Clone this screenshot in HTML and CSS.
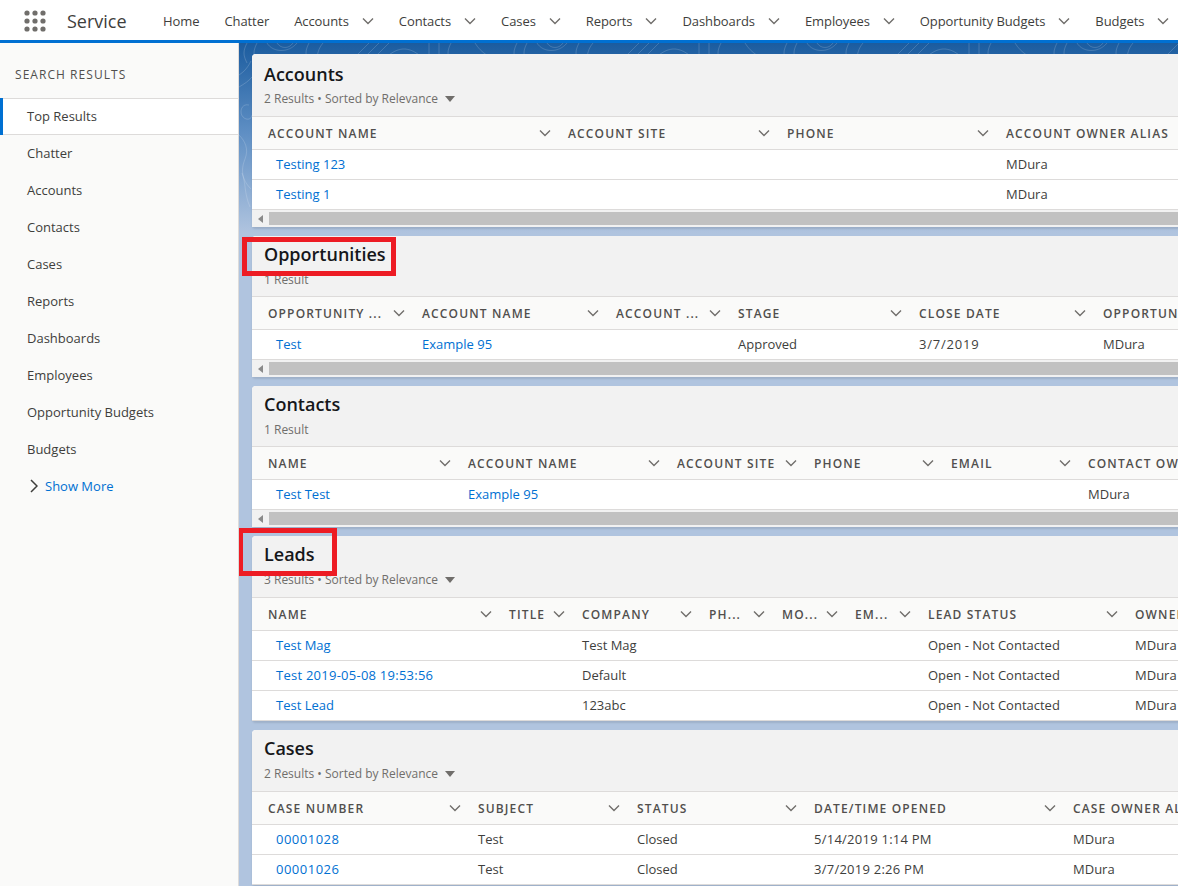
FILE: index.html
```html
<!DOCTYPE html>
<html lang="en">
<head>
<meta charset="utf-8">
<title>Search Results | Service</title>
<link rel="stylesheet" href="styles.css">
</head>
<body>
<header class="topbar">
  <svg class="launcher" width="22" height="22" viewBox="0 0 22 22" aria-hidden="true">
    <g fill="#706e6b">
      <circle cx="3" cy="3" r="2.6"/><circle cx="11" cy="3" r="2.6"/><circle cx="19" cy="3" r="2.6"/>
      <circle cx="3" cy="11" r="2.6"/><circle cx="11" cy="11" r="2.6"/><circle cx="19" cy="11" r="2.6"/>
      <circle cx="3" cy="19" r="2.6"/><circle cx="11" cy="19" r="2.6"/><circle cx="19" cy="19" r="2.6"/>
    </g>
  </svg>
  <span class="app-name">Service</span>
  <nav class="nav">
    <a class="nav-item">Home</a>
    <a class="nav-item">Chatter</a>
    <a class="nav-item has-menu">Accounts <svg class="chev nav-chev" viewBox="0 0 12 8"><path d="M1 1.5l5 5 5-5"/></svg></a>
    <a class="nav-item has-menu">Contacts <svg class="chev nav-chev" viewBox="0 0 12 8"><path d="M1 1.5l5 5 5-5"/></svg></a>
    <a class="nav-item has-menu">Cases <svg class="chev nav-chev" viewBox="0 0 12 8"><path d="M1 1.5l5 5 5-5"/></svg></a>
    <a class="nav-item has-menu">Reports <svg class="chev nav-chev" viewBox="0 0 12 8"><path d="M1 1.5l5 5 5-5"/></svg></a>
    <a class="nav-item has-menu">Dashboards <svg class="chev nav-chev" viewBox="0 0 12 8"><path d="M1 1.5l5 5 5-5"/></svg></a>
    <a class="nav-item has-menu">Employees <svg class="chev nav-chev" viewBox="0 0 12 8"><path d="M1 1.5l5 5 5-5"/></svg></a>
    <a class="nav-item has-menu">Opportunity Budgets <svg class="chev nav-chev" viewBox="0 0 12 8"><path d="M1 1.5l5 5 5-5"/></svg></a>
    <a class="nav-item has-menu">Budgets <svg class="chev nav-chev" viewBox="0 0 12 8"><path d="M1 1.5l5 5 5-5"/></svg></a>
  </nav>
</header>
<div class="shell">
  <aside class="sidebar">
    <h2 class="side-title">SEARCH RESULTS</h2>
    <ul class="side-list">
      <li class="side-item active">Top Results</li>
      <li class="side-item">Chatter</li>
      <li class="side-item">Accounts</li>
      <li class="side-item">Contacts</li>
      <li class="side-item">Cases</li>
      <li class="side-item">Reports</li>
      <li class="side-item">Dashboards</li>
      <li class="side-item">Employees</li>
      <li class="side-item">Opportunity Budgets</li>
      <li class="side-item">Budgets</li>
      <li class="side-item more"><svg class="more-chev" viewBox="0 0 8 14"><path d="M1 1l6 6-6 6"/></svg><a class="link">Show More</a></li>
    </ul>
  </aside>
  <main class="results">
    <svg class="contours" width="940" height="200" aria-hidden="true">
      <defs>
        <pattern id="topo" width="270" height="200" patternUnits="userSpaceOnUse">
          <g fill="none" stroke="#fff" stroke-opacity=".16">
            <path d="M8 0c-4 8-4 12 0 20M18 0c-4 8-4 12 0 20M28 0c6 10 22 10 30 0M38 0c4 6 12 6 16 0M70 0c-4 8-4 12 0 20M84 0c-5 6-6 12-6 18"/>
            <path d="M110 20l20-20M120 20l20-20M130 20l20-20M150 12c10-8 20-8 30 0M190 0v20M200 0v20M212 0c-4 8-4 12 0 20M236 0c6 10 16 16 30 20"/>
            <path d="M0 32c6-4 9-8 12-14M0 44c5-3 10-6 13-10M10 62c-8-2-10 8-6 12s9 2 9-2M0 92c6 6 10 14 6 24s-4 20 6 30M3 130c4 10 2 20 8 34"/>
          </g>
        </pattern>
      </defs>
      <rect width="940" height="200" fill="url(#topo)"/>
    </svg>

    <section class="card">
      <div class="card-head head-tall">
        <h3 class="card-title">Accounts</h3>
        <p class="card-meta">2 Results • Sorted by Relevance <i class="caret"></i></p>
      </div>
      <div class="table t-accounts">
        <div class="row head">
          <div class="th"><span>ACCOUNT NAME</span><svg class="chev" viewBox="0 0 12 8"><path d="M1 1.5l5 5 5-5"/></svg></div>
          <div class="th"><span>ACCOUNT SITE</span><svg class="chev" viewBox="0 0 12 8"><path d="M1 1.5l5 5 5-5"/></svg></div>
          <div class="th"><span>PHONE</span><svg class="chev" viewBox="0 0 12 8"><path d="M1 1.5l5 5 5-5"/></svg></div>
          <div class="th"><span>ACCOUNT OWNER ALIAS</span></div>
        </div>
        <div class="row">
          <div class="td first"><a class="link">Testing 123</a></div><div class="td"></div><div class="td"></div><div class="td">MDura</div>
        </div>
        <div class="row">
          <div class="td first"><a class="link">Testing 1</a></div><div class="td"></div><div class="td"></div><div class="td">MDura</div>
        </div>
      </div>
      <div class="hscroll"><i class="arrow"></i><div class="thumb"></div></div>
    </section>

    <section class="card">
      <div class="highlight hl-opps"></div>
      <div class="card-head head-short">
        <h3 class="card-title">Opportunities</h3>
        <p class="card-meta">1 Result</p>
      </div>
      <div class="table t-opps">
        <div class="row head">
          <div class="th"><span>OPPORTUNITY ...</span><svg class="chev" viewBox="0 0 12 8"><path d="M1 1.5l5 5 5-5"/></svg></div>
          <div class="th"><span>ACCOUNT NAME</span><svg class="chev" viewBox="0 0 12 8"><path d="M1 1.5l5 5 5-5"/></svg></div>
          <div class="th"><span>ACCOUNT ...</span><svg class="chev" viewBox="0 0 12 8"><path d="M1 1.5l5 5 5-5"/></svg></div>
          <div class="th"><span>STAGE</span><svg class="chev" viewBox="0 0 12 8"><path d="M1 1.5l5 5 5-5"/></svg></div>
          <div class="th"><span>CLOSE DATE</span><svg class="chev" viewBox="0 0 12 8"><path d="M1 1.5l5 5 5-5"/></svg></div>
          <div class="th"><span>OPPORTUNITY OWNER</span></div>
        </div>
        <div class="row">
          <div class="td first"><a class="link">Test</a></div><div class="td"><a class="link">Example 95</a></div><div class="td"></div><div class="td">Approved</div><div class="td digits-l">3/7/2019</div><div class="td">MDura</div>
        </div>
      </div>
      <div class="hscroll"><i class="arrow"></i><div class="thumb"></div></div>
    </section>

    <section class="card">
      <div class="card-head head-short">
        <h3 class="card-title">Contacts</h3>
        <p class="card-meta">1 Result</p>
      </div>
      <div class="table t-contacts">
        <div class="row head">
          <div class="th"><span>NAME</span><svg class="chev" viewBox="0 0 12 8"><path d="M1 1.5l5 5 5-5"/></svg></div>
          <div class="th"><span>ACCOUNT NAME</span><svg class="chev" viewBox="0 0 12 8"><path d="M1 1.5l5 5 5-5"/></svg></div>
          <div class="th"><span>ACCOUNT SITE</span><svg class="chev" viewBox="0 0 12 8"><path d="M1 1.5l5 5 5-5"/></svg></div>
          <div class="th"><span>PHONE</span><svg class="chev" viewBox="0 0 12 8"><path d="M1 1.5l5 5 5-5"/></svg></div>
          <div class="th"><span>EMAIL</span><svg class="chev" viewBox="0 0 12 8"><path d="M1 1.5l5 5 5-5"/></svg></div>
          <div class="th"><span>CONTACT OWNER</span></div>
        </div>
        <div class="row">
          <div class="td first"><a class="link">Test Test</a></div><div class="td"><a class="link">Example 95</a></div><div class="td"></div><div class="td"></div><div class="td"></div><div class="td">MDura</div>
        </div>
      </div>
      <div class="hscroll"><i class="arrow"></i><div class="thumb"></div></div>
    </section>

    <section class="card">
      <div class="highlight hl-leads"></div>
      <div class="card-head">
        <h3 class="card-title">Leads</h3>
        <p class="card-meta">3 Results • Sorted by Relevance <i class="caret"></i></p>
      </div>
      <div class="table t-leads">
        <div class="row head">
          <div class="th"><span>NAME</span><svg class="chev" viewBox="0 0 12 8"><path d="M1 1.5l5 5 5-5"/></svg></div>
          <div class="th"><span>TITLE</span><svg class="chev" viewBox="0 0 12 8"><path d="M1 1.5l5 5 5-5"/></svg></div>
          <div class="th"><span>COMPANY</span><svg class="chev" viewBox="0 0 12 8"><path d="M1 1.5l5 5 5-5"/></svg></div>
          <div class="th"><span>PH...</span><svg class="chev" viewBox="0 0 12 8"><path d="M1 1.5l5 5 5-5"/></svg></div>
          <div class="th"><span>MO...</span><svg class="chev" viewBox="0 0 12 8"><path d="M1 1.5l5 5 5-5"/></svg></div>
          <div class="th"><span>EM...</span><svg class="chev" viewBox="0 0 12 8"><path d="M1 1.5l5 5 5-5"/></svg></div>
          <div class="th"><span>LEAD STATUS</span><svg class="chev" viewBox="0 0 12 8"><path d="M1 1.5l5 5 5-5"/></svg></div>
          <div class="th"><span>OWNER</span></div>
        </div>
        <div class="row">
          <div class="td first"><a class="link">Test Mag</a></div><div class="td"></div><div class="td">Test Mag</div><div class="td"></div><div class="td"></div><div class="td"></div><div class="td">Open - Not Contacted</div><div class="td">MDura</div>
        </div>
        <div class="row">
          <div class="td first digits-s"><a class="link">Test 2019-05-08 19:53:56</a></div><div class="td"></div><div class="td">Default</div><div class="td"></div><div class="td"></div><div class="td"></div><div class="td">Open - Not Contacted</div><div class="td">MDura</div>
        </div>
        <div class="row">
          <div class="td first"><a class="link">Test Lead</a></div><div class="td"></div><div class="td">123abc</div><div class="td"></div><div class="td"></div><div class="td"></div><div class="td">Open - Not Contacted</div><div class="td">MDura</div>
        </div>
      </div>
    </section>

    <section class="card">
      <div class="card-head">
        <h3 class="card-title">Cases</h3>
        <p class="card-meta">2 Results • Sorted by Relevance <i class="caret"></i></p>
      </div>
      <div class="table t-cases">
        <div class="row head">
          <div class="th"><span>CASE NUMBER</span><svg class="chev" viewBox="0 0 12 8"><path d="M1 1.5l5 5 5-5"/></svg></div>
          <div class="th"><span>SUBJECT</span><svg class="chev" viewBox="0 0 12 8"><path d="M1 1.5l5 5 5-5"/></svg></div>
          <div class="th"><span>STATUS</span><svg class="chev" viewBox="0 0 12 8"><path d="M1 1.5l5 5 5-5"/></svg></div>
          <div class="th"><span>DATE/TIME OPENED</span><svg class="chev" viewBox="0 0 12 8"><path d="M1 1.5l5 5 5-5"/></svg></div>
          <div class="th"><span>CASE OWNER ALIAS</span></div>
        </div>
        <div class="row">
          <div class="td first digits-m"><a class="link">00001028</a></div><div class="td">Test</div><div class="td">Closed</div><div class="td digits-s">5/14/2019 1:14 PM</div><div class="td">MDura</div>
        </div>
        <div class="row">
          <div class="td first digits-m"><a class="link">00001026</a></div><div class="td">Test</div><div class="td">Closed</div><div class="td digits-s">3/7/2019 2:26 PM</div><div class="td">MDura</div>
        </div>
      </div>
    </section>
  </main>
</div>
</body>
</html>
```
FILE: styles.css
```css
* { box-sizing: border-box; }
html, body { margin: 0; height: 100%; overflow: hidden; }
body { font-family: "Open Sans", "Liberation Sans", sans-serif; font-size: 13px; color: #3e3e3c; background: #fff; }

.topbar { display: flex; align-items: center; height: 43px; padding-top: 2px; border-bottom: 3px solid #0070d2; background: #fff; white-space: nowrap; }
.launcher { margin-left: 24px; flex: none; }
.app-name { margin-left: 21px; width: 96px; flex: none; font-size: 18px; color: #3e3e3c; }
.nav { display: flex; align-items: center; gap: 25px; letter-spacing: -.08px; }
.nav-item { display: flex; align-items: center; color: #3e3e3c; }
.chev { width: 12px; height: 8px; flex: none; fill: none; stroke: #706e6b; stroke-width: 1.4; }
.nav-chev { margin-left: 13px; }

.shell { display: flex; height: 843px; }
.sidebar { width: 239px; flex: none; background: #fafaf9; border-right: 1px solid #dddbda; }
.side-title { margin: 0; height: 55px; padding: 24px 0 0 15px; font-size: 12px; line-height: 16px; font-weight: 400; letter-spacing: 1.05px; color: #514f4d; }
.side-list { list-style: none; margin: 0; padding: 0; }
.side-item { display: flex; align-items: center; height: 37px; padding: 0 0 2px 27px; color: #3e3e3c; }
.side-item.active { position: relative; background: #fff; border-top: 1px solid #dddbda; border-bottom: 1px solid #dddbda; }
.side-item.active::before { content: ""; position: absolute; left: 0; top: -1px; bottom: -1px; width: 3px; background: #0070d2; }
.more { padding-left: 30px; }
.more-chev { width: 8px; height: 14px; margin-right: 7px; fill: none; stroke: #3e3e3c; stroke-width: 1.5; }
.link { color: #0070d2; }

.results { position: relative; flex: 1; min-width: 0; overflow: hidden; padding: 11px 0 0 13px; display: flex; flex-direction: column; gap: 9px;
  background: linear-gradient(180deg, #1b5c9f 0, #5f8fc4 90px, #b0c4df 190px, #b0c4df 100%); }
.contours { position: absolute; left: 0; top: 0; }

.card { position: relative; flex: none; width: 1100px; background: #fff; border-radius: 4px 0 0 4px; box-shadow: 0 2px 2px rgba(0, 0, 0, .1); }
.card-head { height: 62px; padding: 7px 12px 0; background: #f2f2f2; border-bottom: 1px solid #dddbda; border-radius: 4px 0 0 0; }
.head-tall { height: 63px; padding-top: 9px; }
.head-short { height: 61px; }
.card-title { margin: 0; font-size: 18px; line-height: 22px; font-weight: 600; color: #16171a; }
.card-meta { display: flex; align-items: center; margin: 7px 0 0; font-size: 12px; line-height: 16px; color: #706e6b; white-space: pre; }
.head-tall .card-meta { margin-top: 6px; }
.caret { width: 0; height: 0; margin-left: 4px; border-left: 5px solid transparent; border-right: 5px solid transparent; border-top: 6px solid #706e6b; }

.row { display: grid; height: 30px; background: #fff; border-bottom: 1px solid #dddbda; align-items: center; }
.row.head { height: 33px; background: #fafaf9; }
.th { display: flex; align-items: center; justify-content: space-between; padding: 0 9px 0 16px; font-size: 12px; letter-spacing: 1.15px; font-weight: 600; color: #514f4d; white-space: nowrap; overflow: hidden; min-width: 0; }
.th + .th { padding-left: 8px; }
.td { padding: 0 0 2px 8px; white-space: nowrap; color: #3e3e3c; min-width: 0; }
.td.first { padding-left: 24px; }
.digits-s { letter-spacing: .25px; }
.digits-m { letter-spacing: .5px; }
.digits-l { letter-spacing: .8px; }

.t-accounts .row { grid-template-columns: 308px 219px 219px 354px; }
.t-opps .row { grid-template-columns: 162px 194px 122px 181px 184px 257px; }
.t-contacts .row { grid-template-columns: 208px 209px 137px 137px 137px 272px; }
.t-leads .row { grid-template-columns: 249px 73px 127px 73px 73px 73px 207px 225px; }
.t-cases .row { grid-template-columns: 218px 159px 177px 259px 287px; }

.hscroll { display: flex; align-items: center; height: 17px; background: #f1f1f1; }
.arrow { width: 0; height: 0; margin-left: 6px; border-top: 4px solid transparent; border-bottom: 4px solid transparent; border-right: 5px solid #8a8a8a; }
.thumb { flex: 1; height: 13px; margin-left: 6px; background: #c1c1c1; }

.highlight { position: absolute; border: 5px solid #ed1c24; z-index: 2; pointer-events: none; }
.hl-opps { left: -10px; top: 1px; width: 154px; height: 39px; }
.hl-leads { left: -14px; top: -8px; width: 99px; height: 48px; }
```
